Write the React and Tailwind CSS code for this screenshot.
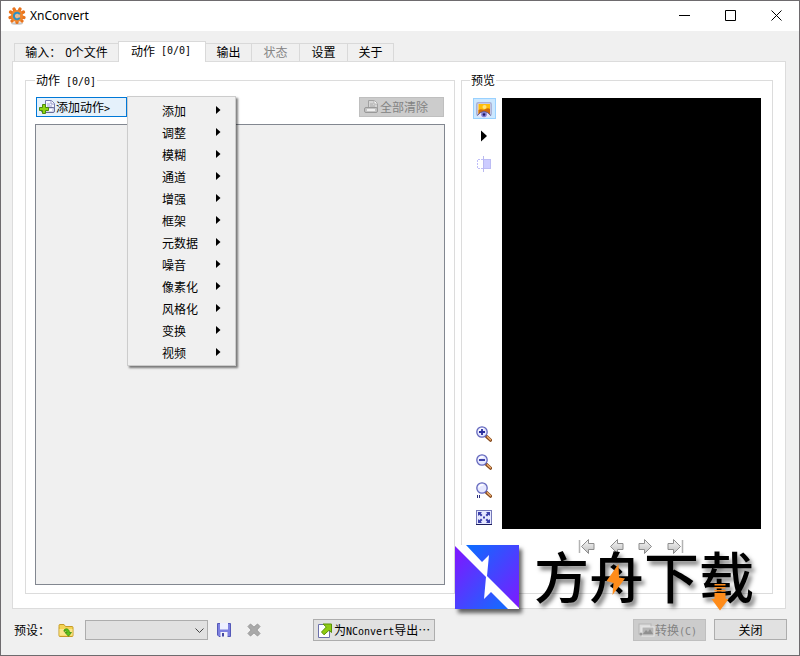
import clsx from 'clsx';

const TABS = [
  { label: '输入：', suffix: '0个文件', width: 'w-[105px]' },
  { label: '动作', mono: '[0/0]', active: true, width: 'w-[88px]' },
  { label: '输出', width: 'w-[47px]' },
  { label: '状态', disabled: true, width: 'w-[49px]' },
  { label: '设置', width: 'w-[49px]' },
  { label: '关于', width: 'w-[47px]' }
];

const MENU = ['添加', '调整', '模糊', '通道', '增强', '框架', '元数据', '噪音', '像素化', '风格化', '变换', '视频'];

// Half-width latin next to the 12px CJK text
function Mono({ children }) {
  return <span className="font-['DejaVu_Sans_Mono',monospace] text-[10px] leading-none whitespace-pre">{children}</span>;
}

function AppLogo() {
  return (
    <svg width="18" height="18" viewBox="0 0 18 18" aria-hidden="true">
      <ellipse cx="9" cy="16.500" rx="6" ry="1.300" fill="#c9c9c9" />
      <path
        d="M9 8.500L6 2M9 8.500l3-6.500M9 8.500L2.500 5M9 8.500L15.500 5M9 8.500l-7 2M9 8.500l7 2M9 8.500l-5 5.500M9 8.500l5 5.500M9 8.500v7"
        stroke="#e8731c"
        strokeWidth="3.200"
        strokeLinecap="round"
      />
      <circle cx="9" cy="9" r="6" fill="#f0862d" />
      <circle cx="9" cy="9" r="3" fill="#e9b98f" />
      <path d="M11.800 7.300A3.200 3.200 0 1 0 11.800 10.700" fill="none" stroke="#2d8fc5" strokeWidth="2" />
    </svg>
  );
}

function CaptionButton({ label, children }) {
  return (
    <button aria-label={label} className="flex w-[46px] items-center justify-center pb-px">
      <svg width="11" height="11" viewBox="0 0 11 11" fill="none" stroke="#000" aria-hidden="true">
        {children}
      </svg>
    </button>
  );
}

function PrinterIcon({ gray }) {
  return (
    <svg width="17" height="16" viewBox="0 0 17 16" aria-hidden="true">
      <path d="M6.500 1.500h6l3 3v6h-9z" fill={gray ? '#d5d5d5' : '#f6f7ff'} stroke={gray ? '#a2a2a2' : '#7478ae'} />
      <path d="M12 1.500V5h3.500" fill="#fff" stroke={gray ? '#b0b0b0' : '#9498c8'} />
      <path d="M8 5h3M8 7h5" stroke={gray ? '#aaa' : '#9da1d8'} />
      <rect x="2.500" y="8.500" width="13" height="5" rx="1.500" fill={gray ? '#c4c4c4' : '#d7d9ee'} stroke={gray ? '#999' : '#686b96'} />
      <path d="M5 11h8" stroke={gray ? '#eee' : '#fff'} strokeWidth="2" />
      {!gray && (
        <path d="M3.500 5.500h3v3h3v3h-3v3h-3v-3h-3v-3h3z" fill="#8fd411" stroke="#4a8a0c" />
      )}
    </svg>
  );
}

function PreviewIcon() {
  return (
    <svg width="16" height="17" viewBox="0 0 16 17" className="translate-y-px" aria-hidden="true">
      <rect x=".8" y="1.800" width="14.400" height="12.500" rx="1.500" fill="#dfe2f5" stroke="#a9b0d5" strokeWidth="1.500" />
      <rect x="2.500" y="3" width="11.500" height="10.500" fill="#ffbd08" />
      <circle cx="8.500" cy="6" r="2" fill="#ffe27a" />
      <path d="M2.500 9c3-2 5 1 7-1 2-1 3-1 4.500 0v5.500H2.500z" fill="#cf6a0c" />
      <path d="M1.500 14.500c3-5 10-5 13 0-3 2.500-10 2.500-13 0z" fill="#e7e5fa" />
      <path d="M1.500 14.500c3-5 10-5 13 0" fill="none" stroke="#55508e" />
      <circle cx="8" cy="13.500" r="2.800" fill="#7f7bd2" />
      <circle cx="8" cy="13.500" r="1.200" fill="#211d63" />
    </svg>
  );
}

function CompareIcon() {
  return (
    <svg width="16" height="16" viewBox="0 0 16 16" aria-hidden="true">
      <path d="M7 3.500H1.500v9H7" fill="none" stroke="#c0bff8" strokeDasharray="2 1" />
      <rect x="7.500" y="3.500" width="7" height="9" fill="#ccccff" stroke="#bcbcf4" />
      <path d="M7.500 0v16" stroke="#b8b8f0" />
    </svg>
  );
}

function Magnifier({ children }) {
  return (
    <svg width="16" height="16" viewBox="0 0 16 16" aria-hidden="true">
      <path d="M10.500 10.500l4 3.700" stroke="#84481c" strokeWidth="3.200" strokeLinecap="round" />
      <path d="M11.300 10.800l3.200 2.900" stroke="#f0b070" strokeWidth="1.400" strokeLinecap="round" />
      <circle cx="6" cy="6" r="5.200" fill="#e6e8ff" stroke="#6468bd" strokeWidth="1.300" />
      <path d="M2.800 5.500a3.500 3.500 0 0 1 4.500-2.500" fill="none" stroke="#fff" strokeWidth="1.400" />
      {children}
    </svg>
  );
}

function FitIcon() {
  return (
    <svg width="16" height="16" viewBox="0 0 16 16" aria-hidden="true">
      <rect x=".5" y=".5" width="15" height="14" fill="#e6e8ff" stroke="#7478b8" />
      <path d="M0 14.500h16" stroke="#1c1d5c" />
      <g fill="#3a3eaa">
        <path d="M2 2h4L4.800 3.300l1.700 1.700-1.500 1.500-1.700-1.700L2 6zM14 2v4l-1.300-1.200L11 6.500 9.500 5l1.700-1.700L10 2zM2 13V9l1.300 1.200L5 8.500 6.500 10l-1.700 1.700L6 13zM14 13h-4l1.200-1.300L9.500 10 11 8.500l1.700 1.700L14 9z" />
        <path d="M7 6.500h2v2H7z" />
      </g>
    </svg>
  );
}

function NavArrow({ flip, bar }) {
  return (
    <svg width="19" height="17" viewBox="0 0 19 17" className={clsx(flip && '-scale-x-100')} aria-hidden="true">
      <defs>
        <linearGradient id="nav" x1="0" y1="0" x2="0" y2="1">
          <stop offset="0" stopColor="#f8f8f8" />
          <stop offset="1" stopColor="#bdbdbd" />
        </linearGradient>
      </defs>
      {bar && <path d="M1.500 2v13" stroke="#b3b3b3" strokeWidth="1.500" />}
      <path d="M3.500 8.500l7-7v4H16v6h-5.500v4z" fill="url(#nav)" stroke="#8d8d8d" strokeLinejoin="round" />
    </svg>
  );
}

function FolderIcon() {
  return (
    <svg width="16" height="15" viewBox="0 0 16 15" aria-hidden="true">
      <path d="M1 3.500V2.500q0-1 1-1h4l1.500 2H14q1 0 1 1v8q0 1-1 1H2q-1 0-1-1z" fill="#f4d354" stroke="#c59a26" />
      <path d="M1.500 6h13v6.500h-13z" fill="#fbe68a" />
      <path d="M6 7c2.500-2.500 5.500-.5 5.500 2.500h2l-3 3.800-3.500-3.800h2c0-1.500-1.500-2-3-1z" fill="#5cc21a" stroke="#31850c" strokeWidth=".7" />
    </svg>
  );
}

function SaveIcon() {
  return (
    <svg width="14" height="14" viewBox="0 0 14 14" aria-hidden="true">
      <path d="M.5.5h13v13H2L.5 12z" fill="#7d80e0" stroke="#5559b8" />
      <path d="M3 0h8v6.500H3z" fill="#eef0ff" />
      <path d="M3.500 9h7v5h-7z" fill="#f4f4f8" />
      <path d="M5 10h2v3.500H5z" fill="#4347a0" />
    </svg>
  );
}

function DeleteIcon() {
  return (
    <svg width="14" height="14" viewBox="0 0 14 14" aria-hidden="true">
      <path d="M3.500 1L7 4.200 10.500 1 13 3.500 9.800 7l3.200 3.500-2.500 2.500L7 9.800 3.500 13 1 10.500 4.200 7 1 3.500z" fill="#a9a9a9" stroke="#979797" strokeLinejoin="round" />
    </svg>
  );
}

function ExportIcon() {
  return (
    <svg width="14" height="15" viewBox="0 0 14 15" aria-hidden="true">
      <path d="M.5 1.500h11v13H.5z" fill="#fff" stroke="#6b70ab" />
      <path d="M5 1h8.500v8.500L11 7.300l-5 4.500L3.500 9l4.800-5z" fill="#8fcc12" stroke="#5b9208" />
    </svg>
  );
}

function ConvertIcon() {
  return (
    <svg width="17" height="15" viewBox="0 0 17 15" aria-hidden="true">
      <rect x="1" y="1" width="12" height="10" fill="#ddd" stroke="#b5b5b5" />
      <rect x="4" y="4" width="12" height="9" fill="#b5b5b5" stroke="#e9e9e9" />
      <path d="M5 11l3-4 2 2 2-3 3 5z" fill="#909090" />
      <circle cx="3" cy="11" r="1.500" fill="#999" />
    </svg>
  );
}

function Tab({ tab }) {
  return (
    <button
      role="tab"
      aria-selected={!!tab.active}
      disabled={tab.disabled}
      className={clsx(
        '-mr-px flex items-center justify-center border border-b-0 border-[#d9d9d9] whitespace-pre',
        tab.width,
        tab.active ? 'z-10 -mb-px h-[21px] bg-white pr-0.5 pb-0.5' : 'h-[18px] bg-[#f0f0f0] pb-px',
        tab.disabled && 'text-[#848484]'
      )}
    >
      {tab.label}
      {tab.mono && <Mono>{' ' + tab.mono}</Mono>}
      {tab.suffix && <span className="pl-1">{tab.suffix}</span>}
    </button>
  );
}

function ActionMenu() {
  return (
    <ul
      role="menu"
      className="absolute -top-px left-full z-20 w-[109px] border border-[#ccc] bg-[#f0f0f0] pt-[3px] pb-px shadow-[2px_2px_2px_rgba(0,0,0,0.5)]"
    >
      {MENU.map((item) => (
        <li key={item} role="none">
          <button role="menuitem" className="flex h-[22px] w-full items-center justify-between pr-[14px] pl-[34px]">
            {item}
            <svg width="5" height="8" viewBox="0 0 5 8" className="mb-0.5" aria-hidden="true">
              <path d="M0 0l4.500 4L0 8z" />
            </svg>
          </button>
        </li>
      ))}
    </ul>
  );
}

function ToolButton({ label, active, children }) {
  return (
    <button
      aria-label={label}
      className={clsx(
        'flex h-[21px] w-[23px] items-center justify-center border pr-px pb-px',
        active ? 'border-[#99d1ff] bg-[#cce8ff]' : 'border-transparent'
      )}
    >
      {children}
    </button>
  );
}

function Watermark() {
  return (
    <div className="pointer-events-none absolute right-[42px] bottom-[46px] z-30 flex h-16 w-[302px] items-start gap-[15px]">
      <svg width="64" height="64" viewBox="0 0 64 64" className="shrink-0 shadow-[3px_4px_4px_rgba(0,0,0,0.6)]" aria-hidden="true">
        <defs>
          <linearGradient id="wm-a" x1="0" y1="0.200" x2="0.800" y2="1">
            <stop offset="0" stopColor="#7a1cff" />
            <stop offset="1" stopColor="#1a66ff" />
          </linearGradient>
          <linearGradient id="wm-b" x1="0.100" y1="0" x2="1" y2="0.900">
            <stop offset="0" stopColor="#0f6bff" />
            <stop offset="1" stopColor="#7a1cff" />
          </linearGradient>
        </defs>
        <path d="M0 0h64v64H0z" fill="#fff" />
        <path d="M0 1l31 31-2 22 7-7 17 17H0z" fill="url(#wm-a)" />
        <path d="M11 0h53v63L32 31l2-21-7 7z" fill="url(#wm-b)" />
      </svg>
      <div className="relative font-['Noto_Sans_CJK_SC',sans-serif] text-[55px] leading-[58px] font-medium whitespace-nowrap text-black [text-shadow:3px_4px_4px_rgba(0,0,0,0.5)]">
        方舟下载
        <svg width="220" height="70" viewBox="0 0 220 70" className="absolute top-0 left-0" aria-hidden="true">
          <path d="M84.500 19L72.500 36l7 2-1 12L91 33.500l-6-1z" fill="#ff8c1a" />
          <path d="M180.500 39h11v1.500h-11zM180.500 42h11v1.500h-11zM180.500 45h11v1.500h-11zM180.500 48h11v6h3L186 65.500 177.500 54h3z" fill="#ff8c1a" />
        </svg>
      </div>
    </div>
  );
}

export default function App() {
  return (
    <div className="relative flex h-screen flex-col border border-[#6e6b6e] bg-[#f0f0f0] font-['Noto_Sans_CJK_SC',sans-serif] text-[12px] leading-[18px] text-black">
      <header className="flex h-[30px] shrink-0 bg-white">
        <div className="flex flex-1 items-center gap-1 pl-[7px]">
          <AppLogo />
          <h1 className="font-['Noto_Sans',sans-serif] text-[12px]">XnConvert</h1>
        </div>
        <CaptionButton label="最小化">
          <path d="M0 5.500h11" />
        </CaptionButton>
        <CaptionButton label="最大化">
          <path d="M.5.5h10v10H.5z" />
        </CaptionButton>
        <CaptionButton label="关闭窗口">
          <path d="M.5.5l10 10M10.500.5l-10 10" />
        </CaptionButton>
      </header>

      <main className="flex min-h-0 flex-1 flex-col pt-[10px] pr-[13px] pl-[11px]">
        <div role="tablist" className="flex h-5 shrink-0 items-end pl-0.5">
          {TABS.map((tab) => (
            <Tab key={tab.label} tab={tab} />
          ))}
        </div>

        <div className="flex min-h-0 flex-1 gap-1.5 border border-[#dcdcdc] bg-white px-3 pt-[9px] pb-[14px]">
          <fieldset className="flex min-w-0 flex-1 flex-col border border-[#dcdcdc] px-[9px] pt-2 pb-2">
            <legend className="h-[18px] px-px">
              动作<Mono>{' [0/0]'}</Mono>
            </legend>
            <div className="mb-[7px] flex h-5 shrink-0 justify-between px-px">
              <div className="relative flex">
                <button className="flex w-[91px] items-center border border-[#0078d7] bg-[#e5f1fb] pl-0.5 whitespace-nowrap">
                  <PrinterIcon />
                  <span>
                    添加动作<Mono>&gt;</Mono>
                  </span>
                </button>
                <ActionMenu />
              </div>
              <button
                disabled
                className="flex w-[85px] items-center gap-px border border-[#bfbfbf] bg-[#ccc] pl-0.5 text-[#838383]"
              >
                <PrinterIcon gray />
                全部清除
              </button>
            </div>
            <div className="flex-1 border border-[#828790] bg-[#f0f0f0]" />
          </fieldset>

          <fieldset className="flex w-[312px] shrink-0 flex-col border border-[#dcdcdc] px-[11px] pt-[9px]">
            <legend className="-ml-[3px] h-[18px] px-px">预览</legend>
            <div className="flex min-h-0 flex-1 gap-1.5">
              <div className="flex flex-col justify-between">
                <div className="flex flex-col gap-[7px]">
                  <ToolButton label="预览" active>
                    <PreviewIcon />
                  </ToolButton>
                  <ToolButton label="播放">
                    <svg width="6" height="12" viewBox="0 0 6 12" aria-hidden="true">
                      <path d="M0 .5L6 6l-6 5.500z" />
                    </svg>
                  </ToolButton>
                  <ToolButton label="对比">
                    <CompareIcon />
                  </ToolButton>
                </div>
                <div className="flex flex-col gap-[7px]">
                  <ToolButton label="放大">
                    <Magnifier>
                      <path d="M3 6h6M6 3v6" stroke="#2a2e9e" strokeWidth="1.800" />
                    </Magnifier>
                  </ToolButton>
                  <ToolButton label="缩小">
                    <Magnifier>
                      <path d="M3 6h6" stroke="#2a2e9e" strokeWidth="1.800" />
                    </Magnifier>
                  </ToolButton>
                  <ToolButton label="实际大小">
                    <Magnifier>
                      <path d="M1.500 13v3M3.500 13v3" stroke="#2a2e7e" />
                    </Magnifier>
                  </ToolButton>
                  <ToolButton label="适合窗口">
                    <FitIcon />
                  </ToolButton>
                </div>
              </div>
              <div className="flex-1 bg-black" />
            </div>
            <div className="flex h-16 shrink-0 items-start justify-center gap-[10px] pt-[9px] pl-[28px]">
              <button aria-label="第一个"><NavArrow bar /></button>
              <button aria-label="上一个"><NavArrow /></button>
              <button aria-label="下一个"><NavArrow flip /></button>
              <button aria-label="最后一个"><NavArrow flip bar /></button>
            </div>
          </fieldset>
        </div>
      </main>

      <footer className="flex shrink-0 items-center pt-[10px] pr-3 pb-[14px] pl-[13px]">
        <label htmlFor="preset" className="w-[44px]">预设：</label>
        <button aria-label="载入预设" className="mr-[11px]"><FolderIcon /></button>
        <div className="relative flex">
          <select
            id="preset"
            className="h-5 w-[123px] appearance-none border border-[#adadad] bg-[#e1e1e1]"
          />
          <svg
            width="9"
            height="6"
            viewBox="0 0 9 6"
            className="pointer-events-none absolute top-2 right-1"
            fill="none"
            stroke="#444"
            aria-hidden="true"
          >
            <path d="M.5.5l4 4 4-4" />
          </svg>
        </div>
        <button aria-label="保存预设" className="ml-[9px]"><SaveIcon /></button>
        <button aria-label="删除预设" className="ml-4"><DeleteIcon /></button>
        <button className="ml-[52px] flex h-[22px] w-[122px] items-center gap-0.5 border border-[#adadad] bg-[#e1e1e1] pl-1 whitespace-nowrap">
          <ExportIcon />
          <span>
            为<Mono>NConvert</Mono>导出…
          </span>
        </button>
        <div className="ml-auto flex gap-2">
          <button
            disabled
            className="flex h-[22px] w-[73px] items-center border border-[#bfbfbf] bg-[#ccc] pl-1 whitespace-nowrap text-[#838383]"
          >
            <ConvertIcon />
            <span>
              转换<Mono>(C)</Mono>
            </span>
          </button>
          <button className="h-[21px] w-[73px] border border-[#adadad] bg-[#e1e1e1]">关闭</button>
        </div>
      </footer>

      <Watermark />
    </div>
  );
}
